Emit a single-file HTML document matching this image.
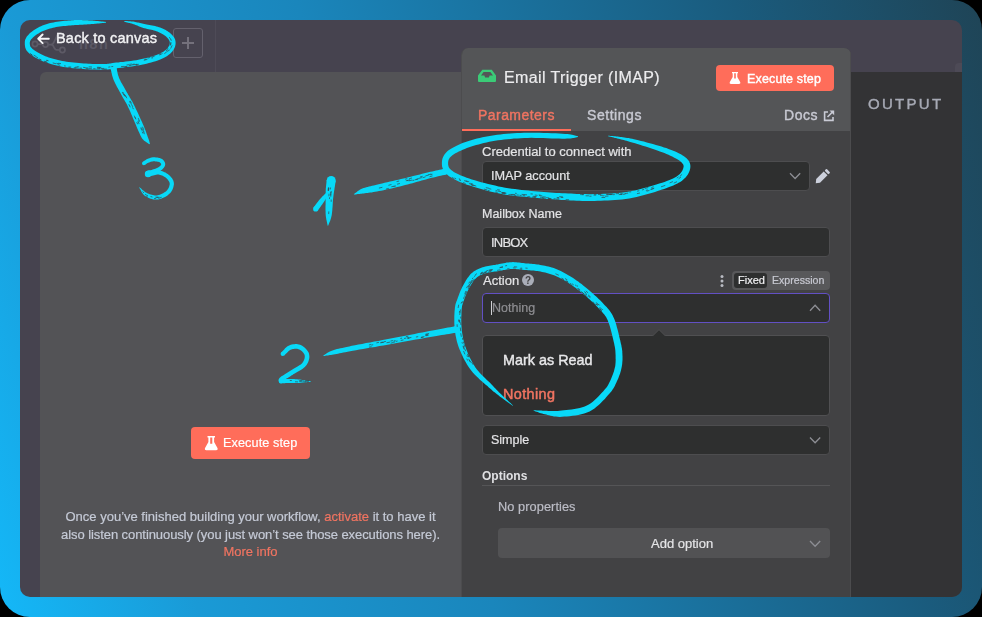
<!DOCTYPE html>
<html><head><meta charset="utf-8">
<style>
*{margin:0;padding:0;box-sizing:border-box}
html,body{width:982px;height:617px;overflow:hidden;background:#000}
body{position:relative;font-family:"Liberation Sans",sans-serif}
.a{position:absolute}
.t{position:absolute;white-space:nowrap;will-change:transform;-webkit-text-stroke:.2px currentColor}
.m{-webkit-text-stroke:.4px currentColor}
#frame{left:0;top:0;width:982px;height:617px;border-radius:30px;background:linear-gradient(72deg,#14b8f8 0%,#1a9ad6 17%,#1a86bc 42%,#1a5b7d 79%,#1f4456 100%)}
#inner{left:20px;top:20px;width:942px;height:577px;border-radius:10px;background:#46434f;overflow:hidden}
.box{position:absolute;background:#2e2f2f;border:1px solid #4d4d4f;border-radius:4px}
.lbl{color:#e4e4e6}
</style></head><body>
<div id="frame" class="a"></div>
<div id="inner" class="a">
  <!-- top bar -->
  <div class="a" style="left:195px;top:0;width:1px;height:52px;background:#4e4b57"></div>
  <div class="a" style="left:153px;top:8px;width:30px;height:30px;border:1px solid #64616d;border-radius:3px"></div>
  <div class="a" style="left:161.9px;top:21.9px;width:12px;height:2.2px;background:#74717c"></div>
  <div class="a" style="left:166.9px;top:17.2px;width:2.2px;height:11.7px;background:#74717c"></div>
  <!-- input panel -->
  <div class="a" style="left:20px;top:52px;width:430px;height:540px;background:#535356;border-radius:6px 0 0 0"></div>
  <div class="a" style="left:935px;top:43px;width:7px;height:9px;background:#4d4a56;border-radius:4px 0 0 0"></div>
  <!-- output panel -->
  <div class="a" style="left:831px;top:52px;width:120px;height:540px;background:#333335"></div>
</div>

<!-- n8n logo (faded) -->
<svg class="a" style="left:0;top:0" width="120" height="70" viewBox="0 0 120 70">
  <g fill="none" stroke="#5d5a66" stroke-width="1.7">
    <circle cx="35" cy="44" r="2.6"/><circle cx="45.5" cy="44.5" r="2.6"/><circle cx="62.4" cy="50" r="2.6"/><circle cx="59" cy="37.5" r="2.6"/>
    <path d="M37.6,44.2 H42.9 M48.1,44.6 H51 Q53,44.6 54,42 L55.5,39 Q56,37.8 56.4,37.6 M51,44.6 Q53,44.6 54,47.5 L55.5,49.5 Q56.5,50 59.8,50"/>
  </g>
  <text x="79" y="49.2" font-family="Liberation Sans" font-weight="bold" font-size="14.5" fill="#5b5865" letter-spacing="1.5">n8n</text>
</svg>

<!-- node panel -->
<div class="a" style="left:461px;top:48px;width:390px;height:549px;background:#424244;border-radius:7px 7px 0 0;overflow:hidden;border-left:1px solid #4c4c4e">
  <div class="a" style="left:0;top:0;width:390px;height:83px;background:#545557"></div>
  <div class="a" style="left:0;top:81px;width:109px;height:2px;background:#ff6d5a"></div>
  <div class="a" style="left:388px;top:0;width:1px;height:549px;background:#4c4c4e"></div>
</div>

<!-- texts -->
<svg class="a" style="left:0;top:0" width="60" height="60" viewBox="0 0 60 60"><path d="M48.8,38.8 H38.2 M42.6,34.5 L38.2,38.8 L42.6,43.1" fill="none" stroke="#f4f4f6" stroke-width="1.9" stroke-linecap="round" stroke-linejoin="round"/></svg>
<div class="t m" style="left:56.4px;top:30.5px;font-size:14.5px;line-height:14.5px;letter-spacing:.2px;color:#f2f2f4">Back to canvas</div>



<div class="t" style="left:503.9px;top:69.5px;font-size:16px;line-height:16px;letter-spacing:.38px;color:#ececee">Email Trigger (IMAP)</div>
<div class="a" style="left:716px;top:65px;width:118px;height:26px;background:#ff6d5a;border-radius:4px"></div>
<svg class="a" style="left:716px;top:65px" width="30" height="26" viewBox="716 65 30 26"><path fill="#fff" fill-rule="evenodd" d="M732,72 H738 V73.3 H737.3 V77 L740.3,82.2 Q740.8,84 739,84 H731 Q729.2,84 729.7,82.2 L732.7,77 V73.3 H732 Z M734.2,73.3 H735.8 V78.6 H734.2 Z"/></svg>
<div class="t m" style="left:746.5px;top:72.8px;font-size:12.5px;line-height:12.5px;letter-spacing:.15px;color:#fff">Execute step</div>

<div class="t m" style="left:478.1px;top:107.8px;font-size:14px;line-height:14px;letter-spacing:.45px;color:#f07461">Parameters</div>
<div class="t m" style="left:586.9px;top:107.8px;font-size:14px;line-height:14px;letter-spacing:.55px;color:#c8c9d2">Settings</div>
<div class="t m" style="left:784.1px;top:107.8px;font-size:14px;line-height:14px;letter-spacing:.55px;color:#c8c9d2">Docs</div>
<div class="t m" style="left:867.8px;top:95.6px;font-size:15px;line-height:15px;letter-spacing:2.3px;color:#a7aab5">OUTPUT</div>

<div class="t lbl" style="left:482.3px;top:145.1px;font-size:13px;line-height:13px">Credential to connect with</div>
<div class="box" style="left:482px;top:161px;width:328px;height:30px"></div>
<div class="t lbl" style="left:490.5px;top:170px;font-size:12.7px;line-height:12.7px">IMAP account</div>

<div class="t lbl" style="left:482.3px;top:208.3px;font-size:12.5px;line-height:12.5px">Mailbox Name</div>
<div class="box" style="left:482px;top:227px;width:348px;height:30px"></div>
<div class="t lbl" style="left:490.5px;top:235.7px;font-size:13px;line-height:13px;letter-spacing:-.8px">INBOX</div>

<div class="t lbl" style="left:482.7px;top:273.8px;font-size:13px;line-height:13px">Action</div>
<div class="a" style="left:732px;top:271px;width:98px;height:19px;background:#58585a;border-radius:4px"></div>
<div class="a" style="left:734px;top:273px;width:33px;height:15px;background:#2e2f2f;border-radius:3px"></div>
<div class="t" style="left:737.5px;top:274.8px;font-size:11px;line-height:11px;color:#f0f0f2">Fixed</div>
<div class="t" style="left:771.7px;top:275.1px;font-size:10.6px;line-height:10.6px;color:#c8c9d2">Expression</div>
<div class="box" style="left:482px;top:293px;width:348px;height:30px;border-color:#6250c4"></div>
<div class="a" style="left:491px;top:301px;width:1px;height:14px;background:#d0d0d4"></div>
<div class="t" style="left:492.4px;top:302.4px;font-size:12.5px;line-height:12.5px;color:#8e8e92">Nothing</div>

<div class="box" style="left:482px;top:335px;width:348px;height:81px;background:#2d2e2e;border-color:#505052"></div>
<svg class="a" style="left:650px;top:328px" width="18" height="9" viewBox="0 0 18 9"><path d="M2.5,8 L9,1.6 L15.5,8" fill="#2d2e2e" stroke="#505052" stroke-width="1"/><rect x="2" y="8" width="14" height="1" fill="#2d2e2e"/></svg>
<div class="t m" style="left:503.4px;top:352.7px;font-size:14.4px;line-height:14.4px;color:#e8e8ea">Mark as Read</div>
<div class="t" style="left:503.4px;top:387px;font-size:14.4px;line-height:14.4px;letter-spacing:.4px;-webkit-text-stroke:.5px #f07461;color:#f07461">Nothing</div>

<div class="box" style="left:482px;top:425px;width:348px;height:30px"></div>
<div class="t lbl" style="left:490.8px;top:434.3px;font-size:12.5px;line-height:12.5px">Simple</div>

<div class="t lbl" style="left:482.3px;top:469.8px;font-size:12px;line-height:12px;font-weight:bold;-webkit-text-stroke:0;color:#e0e0e3">Options</div>
<div class="a" style="left:482px;top:485px;width:348px;height:1px;background:#555557"></div>
<div class="t" style="left:497.5px;top:501px;letter-spacing:.08px;font-size:12.75px;line-height:12.75px;color:#bcbdc6">No properties</div>
<div class="a" style="left:498px;top:528px;width:332px;height:30px;background:#525254;border-radius:4px"></div>
<div class="t lbl" style="left:651px;top:537px;font-size:13px;line-height:13px">Add option</div>

<div class="a" style="left:191px;top:427px;width:119px;height:32px;background:#ff6d5a;border-radius:4px"></div>
<svg class="a" style="left:191px;top:427px" width="40" height="32" viewBox="191 427 40 32"><path fill="#fff" fill-rule="evenodd" d="M207.5,436 H215 V437.6 H214.1 V442 L217.6,448.2 Q218.2,450.2 216.2,450.2 H206.3 Q204.3,450.2 204.9,448.2 L208.4,442 V437.6 H207.5 Z M210.2,437.6 H212.3 V443.8 H210.2 Z"/></svg>
<div class="t" style="left:222.5px;top:436.9px;font-size:12.7px;line-height:12.7px;letter-spacing:.08px;color:#fff">Execute step</div>

<div class="t" style="left:40px;width:421px;text-align:center;top:508.3px;font-size:13px;line-height:17.7px;color:#c5cad6;white-space:normal">Once you’ve finished building your workflow, <span style="color:#f07461">activate</span> it to have it<br><span style="letter-spacing:-.07px">also listen continuously (you just won’t see those executions here).</span><br><span style="color:#f07461">More info</span></div>

<svg class="a" style="left:0;top:0" width="982" height="617" viewBox="0 0 982 617">
  <!-- inbox -->
  <path fill="#3bcb77" fill-rule="evenodd" d="M478,75.5 L482.3,69.8 H491.8 L496,75.5 V81 Q496,82.1 495,82.1 H479 Q478,82.1 478,81 Z M481,75.5 L483.6,72 H490.4 L493,75.5 H489.6 L488.9,77.6 H485.1 L484.4,75.5 Z"/>
  <!-- docs external icon -->
  <path fill="none" stroke="#c9cbd5" stroke-width="1.6" d="M828,112 H824.6 V120.4 H833 V117"/>
  <path fill="none" stroke="#c9cbd5" stroke-width="1.6" d="M827.5,117 L833.2,111.3"/>
  <path fill="#c9cbd5" d="M829.5,110.6 H834.2 V115.3 Z"/>
  <!-- pencil -->
  <g fill="#ccd0dc" transform="translate(823,176) rotate(-45)">
    <path d="M-10.2,0 L-6.9,-2.7 H3.7 V2.7 H-6.9 Z"/><rect x="4.9" y="-2.7" width="2.7" height="5.4" rx=".9"/>
  </g>
  <!-- chevrons -->
  <g fill="none" stroke="#8d8e94" stroke-width="1.3">
    <path d="M790,173.2 L795.1,178.5 L800.2,173.2"/>
    <path d="M810,437.5 L815.1,442.8 L820.2,437.5"/>
    <path d="M810,541 L815.1,546.2 L820.2,541"/>
    <path d="M810,310.8 L815.1,305.3 L820.2,310.8"/>
  </g>
  <!-- help -->
  <circle cx="528" cy="280" r="6" fill="#a9adb8"/>
  <text x="528" y="284" text-anchor="middle" font-family="Liberation Sans" font-weight="bold" font-size="10" fill="#424244">?</text>
  <!-- 3 dots -->
  <g fill="#b8bac2"><circle cx="722" cy="276.4" r="1.5"/><circle cx="722" cy="280.9" r="1.5"/><circle cx="722" cy="285.4" r="1.5"/></g>
</svg>
<svg class="a" style="left:0;top:0" width="982" height="617" viewBox="0 0 982 617"><g fill="#08d9f8"><path d="M106.0,21.9 L105.0,21.8 L104.0,21.7 L103.1,21.6 L102.1,21.5 L101.1,21.4 L100.1,21.3 L99.1,21.2 L98.1,21.1 L97.1,21.0 L96.0,20.9 L94.9,20.8 L93.7,20.7 L92.5,20.6 L91.3,20.6 L90.1,20.5 L88.9,20.4 L87.6,20.3 L86.4,20.3 L85.2,20.2 L84.0,20.2 L82.8,20.2 L81.7,20.1 L80.6,20.1 L79.5,20.1 L78.3,20.1 L77.2,20.1 L75.9,20.1 L74.6,20.1 L73.3,20.2 L71.8,20.3 L70.2,20.4 L68.5,20.5 L66.7,20.7 L64.8,20.8 L62.9,21.0 L60.9,21.2 L59.0,21.4 L57.1,21.7 L55.2,22.0 L53.5,22.4 L51.8,22.7 L50.1,23.1 L48.5,23.6 L47.0,24.0 L45.4,24.5 L43.9,25.1 L42.4,25.6 L41.0,26.2 L39.6,26.8 L38.3,27.5 L37.0,28.2 L35.7,28.9 L34.5,29.7 L33.3,30.6 L32.1,31.4 L31.1,32.3 L30.0,33.1 L29.1,34.0 L28.3,34.9 L27.5,35.7 L26.8,36.6 L26.3,37.5 L25.8,38.4 L25.4,39.3 L25.1,40.1 L24.9,41.0 L24.8,41.9 L24.8,42.8 L24.8,43.6 L24.8,44.4 L24.9,45.2 L25.0,46.0 L25.1,46.8 L25.3,47.7 L25.6,48.6 L26.0,49.5 L26.5,50.4 L27.2,51.3 L28.0,52.2 L28.9,53.1 L29.9,54.0 L31.0,54.8 L32.3,55.7 L33.6,56.6 L35.1,57.4 L36.6,58.3 L38.2,59.1 L39.8,59.9 L41.5,60.7 L43.3,61.4 L45.0,62.1 L46.8,62.7 L48.7,63.3 L50.7,63.9 L52.6,64.5 L54.7,65.0 L56.8,65.5 L58.9,66.0 L61.1,66.4 L63.3,66.9 L65.7,67.2 L68.1,67.6 L70.7,67.9 L73.3,68.2 L75.9,68.4 L78.5,68.6 L81.0,68.8 L83.4,69.0 L85.8,69.2 L87.9,69.3 L90.0,69.4 L91.9,69.5 L93.8,69.6 L95.7,69.6 L97.4,69.7 L99.1,69.7 L100.7,69.7 L102.2,69.7 L103.7,69.6 L105.1,69.6 L106.3,69.5 L107.4,69.5 L108.3,69.4 L109.1,69.3 L109.8,69.2 L110.5,69.0 L111.3,68.9 L112.3,68.8 L113.5,68.6 L114.9,68.4 L116.8,68.2 L118.9,67.9 L121.2,67.7 L123.7,67.4 L126.3,67.1 L129.0,66.8 L131.7,66.5 L134.4,66.1 L137.0,65.7 L139.4,65.2 L141.8,64.8 L144.2,64.2 L146.5,63.7 L148.9,63.1 L151.2,62.5 L153.5,61.8 L155.6,61.2 L157.7,60.5 L159.6,59.8 L161.4,59.1 L163.0,58.3 L164.5,57.6 L165.9,56.8 L167.2,56.0 L168.4,55.1 L169.4,54.3 L170.4,53.4 L171.3,52.5 L172.1,51.7 L172.8,50.8 L173.5,49.8 L174.1,48.8 L174.6,47.8 L175.0,46.7 L175.3,45.6 L175.5,44.6 L175.6,43.5 L175.6,42.4 L175.5,41.4 L175.3,40.3 L175.0,39.3 L174.5,38.2 L174.0,37.3 L173.3,36.4 L172.6,35.6 L171.9,34.8 L171.1,34.0 L170.3,33.3 L169.5,32.6 L168.6,31.9 L167.7,31.3 L166.7,30.7 L165.7,30.1 L164.6,29.6 L163.6,29.1 L162.5,28.6 L161.3,28.1 L160.1,27.6 L159.0,27.2 L157.7,26.8 L156.4,26.4 L155.1,26.1 L153.7,25.8 L152.2,25.5 L150.8,25.2 L149.4,25.0 L148.0,24.8 L146.7,24.5 L145.5,24.3 L144.3,24.1 L143.2,23.8 L142.2,23.6 L141.2,23.3 L140.2,23.1 L139.2,22.8 L138.2,22.6 L137.3,22.4 L136.3,22.2 L135.3,22.0 L134.3,21.8 L133.3,21.6 L132.3,21.5 L131.3,21.4 L130.3,21.3 L129.3,21.2 L128.3,21.2 L127.3,21.1 L126.3,21.1 L125.3,21.0 L124.4,20.9 L124.2,21.7 L125.2,21.9 L126.1,22.2 L127.1,22.4 L128.1,22.7 L129.0,22.9 L130.0,23.1 L130.9,23.4 L131.8,23.6 L132.8,23.9 L133.7,24.2 L134.6,24.5 L135.5,24.9 L136.4,25.2 L137.3,25.6 L138.2,26.0 L139.1,26.4 L140.1,26.8 L141.1,27.2 L142.1,27.6 L143.3,27.9 L144.5,28.3 L145.8,28.6 L147.2,28.9 L148.6,29.2 L150.0,29.5 L151.3,29.8 L152.7,30.1 L154.0,30.5 L155.2,30.8 L156.3,31.2 L157.3,31.6 L158.4,32.0 L159.4,32.5 L160.4,33.0 L161.4,33.4 L162.3,33.9 L163.2,34.5 L164.0,35.0 L164.7,35.5 L165.4,36.1 L166.1,36.6 L166.7,37.2 L167.3,37.8 L167.9,38.5 L168.4,39.1 L168.8,39.7 L169.1,40.2 L169.4,40.8 L169.6,41.2 L169.7,41.7 L169.8,42.2 L169.8,42.7 L169.8,43.2 L169.7,43.7 L169.6,44.3 L169.5,44.9 L169.3,45.4 L169.0,46.0 L168.6,46.6 L168.2,47.2 L167.7,47.9 L167.1,48.6 L166.4,49.3 L165.7,49.9 L164.9,50.6 L164.0,51.3 L163.0,52.0 L161.8,52.6 L160.6,53.3 L159.2,53.9 L157.6,54.6 L155.9,55.2 L153.9,55.8 L151.9,56.5 L149.7,57.1 L147.5,57.7 L145.2,58.2 L142.9,58.8 L140.6,59.3 L138.4,59.8 L136.1,60.2 L133.6,60.6 L131.0,60.9 L128.3,61.3 L125.7,61.6 L123.1,61.9 L120.6,62.1 L118.3,62.4 L116.1,62.6 L114.3,62.8 L112.7,63.0 L111.4,63.2 L110.4,63.4 L109.6,63.5 L108.9,63.7 L108.3,63.7 L107.6,63.8 L106.9,63.9 L106.0,64.0 L104.9,64.0 L103.6,64.0 L102.2,64.1 L100.7,64.1 L99.1,64.1 L97.5,64.1 L95.8,64.0 L94.0,64.0 L92.2,63.9 L90.3,63.8 L88.3,63.7 L86.1,63.6 L83.8,63.4 L81.4,63.2 L78.9,63.0 L76.4,62.8 L73.8,62.6 L71.3,62.3 L68.8,62.0 L66.5,61.7 L64.3,61.3 L62.2,60.9 L60.1,60.5 L58.0,60.1 L56.1,59.6 L54.1,59.1 L52.2,58.6 L50.4,58.0 L48.7,57.4 L47.0,56.8 L45.3,56.2 L43.8,55.5 L42.2,54.8 L40.7,54.1 L39.3,53.3 L37.9,52.6 L36.6,51.8 L35.4,51.0 L34.3,50.2 L33.3,49.5 L32.5,48.9 L31.9,48.3 L31.4,47.8 L31.0,47.3 L30.7,46.9 L30.4,46.5 L30.2,46.1 L30.1,45.6 L30.0,45.1 L29.9,44.6 L29.8,44.0 L29.8,43.4 L29.8,42.9 L29.8,42.5 L29.9,42.0 L30.0,41.6 L30.2,41.1 L30.4,40.6 L30.7,40.2 L31.0,39.6 L31.5,39.1 L32.1,38.4 L32.7,37.8 L33.5,37.0 L34.4,36.3 L35.3,35.5 L36.3,34.8 L37.4,34.1 L38.5,33.4 L39.6,32.7 L40.7,32.1 L41.9,31.5 L43.1,31.0 L44.4,30.5 L45.7,30.0 L47.1,29.5 L48.5,29.0 L50.0,28.6 L51.5,28.2 L53.0,27.8 L54.5,27.4 L56.1,27.1 L57.9,26.8 L59.7,26.6 L61.5,26.3 L63.4,26.1 L65.3,25.9 L67.2,25.8 L68.9,25.6 L70.6,25.4 L72.2,25.3 L73.6,25.2 L74.9,25.1 L76.1,25.0 L77.3,24.9 L78.4,24.9 L79.5,24.8 L80.6,24.8 L81.7,24.7 L82.9,24.7 L84.0,24.6 L85.2,24.5 L86.5,24.4 L87.7,24.3 L88.9,24.3 L90.1,24.2 L91.4,24.1 L92.6,24.0 L93.7,23.9 L94.9,23.8 L96.0,23.7 L97.1,23.6 L98.1,23.5 L99.1,23.4 L100.1,23.3 L101.1,23.2 L102.1,23.1 L103.1,23.0 L104.0,22.9 L105.0,22.8 L106.0,22.7Z"/>
<path d="M110.6,68.7 L110.8,69.7 L111.1,70.7 L111.3,71.7 L111.5,72.8 L111.8,73.8 L112.0,75.0 L112.3,76.1 L112.7,77.3 L113.1,78.6 L113.6,79.9 L114.2,81.2 L114.8,82.6 L115.5,84.0 L116.3,85.4 L117.0,86.9 L117.8,88.3 L118.6,89.7 L119.4,91.2 L120.1,92.6 L120.9,93.9 L121.6,95.3 L122.4,96.7 L123.1,97.9 L123.9,99.2 L124.6,100.5 L125.3,101.8 L126.1,103.1 L126.9,104.5 L127.6,106.0 L128.4,107.7 L129.3,109.5 L130.2,111.5 L131.1,113.7 L132.1,115.9 L133.0,118.2 L134.0,120.5 L134.9,122.7 L135.8,124.8 L136.6,126.7 L137.3,128.4 L137.9,129.8 L138.4,131.0 L138.9,132.1 L139.4,133.1 L139.8,134.1 L140.2,134.9 L140.6,135.7 L141.0,136.5 L141.4,137.2 L141.8,138.0 L142.3,138.7 L142.8,139.3 L143.3,139.8 L143.7,140.3 L144.2,140.7 L144.6,141.0 L145.0,141.3 L145.4,141.5 L145.7,141.8 L146.1,142.0 L146.4,142.3 L146.8,142.6 L147.2,142.8 L147.5,143.0 L147.9,143.3 L148.2,143.5 L148.6,143.7 L148.9,143.9 L149.2,144.1 L149.6,144.3 L150.0,144.1 L149.9,143.7 L149.8,143.3 L149.7,142.9 L149.6,142.5 L149.5,142.1 L149.4,141.7 L149.3,141.3 L149.2,140.9 L149.1,140.4 L148.9,140.0 L148.7,139.5 L148.6,139.0 L148.4,138.6 L148.2,138.2 L148.1,137.7 L147.9,137.3 L147.8,136.9 L147.6,136.4 L147.4,135.8 L147.2,135.2 L146.9,134.6 L146.7,133.9 L146.5,133.2 L146.2,132.4 L145.9,131.6 L145.5,130.6 L145.1,129.6 L144.7,128.4 L144.1,127.1 L143.5,125.6 L142.8,124.0 L142.0,122.1 L141.0,120.1 L140.1,117.9 L139.0,115.6 L138.0,113.3 L136.9,111.0 L135.9,108.9 L134.9,106.8 L134.0,104.9 L133.1,103.2 L132.3,101.6 L131.4,100.2 L130.6,98.8 L129.8,97.4 L129.1,96.1 L128.3,94.9 L127.6,93.6 L126.9,92.4 L126.1,91.1 L125.4,89.7 L124.6,88.3 L123.8,86.8 L123.0,85.4 L122.2,84.1 L121.4,82.7 L120.7,81.4 L120.1,80.1 L119.5,78.9 L119.0,77.7 L118.6,76.6 L118.2,75.6 L117.9,74.6 L117.7,73.6 L117.5,72.6 L117.3,71.6 L117.1,70.6 L116.9,69.5 L116.7,68.4 L116.4,67.3Z"/><circle cx="113.5" cy="68.0" r="3.0"/>
<path d="M144.8,164.9 L145.2,164.6 L145.6,164.4 L146.1,164.1 L146.5,163.8 L146.9,163.6 L147.2,163.3 L147.6,163.1 L148.0,162.9 L148.4,162.7 L148.8,162.5 L149.2,162.4 L149.7,162.2 L150.2,162.0 L150.7,161.8 L151.2,161.7 L151.6,161.6 L152.1,161.5 L152.6,161.4 L153.1,161.3 L153.6,161.3 L154.1,161.3 L154.8,161.3 L155.5,161.4 L156.2,161.4 L156.9,161.5 L157.6,161.7 L158.2,161.8 L158.8,161.9 L159.2,162.1 L159.6,162.3 L159.9,162.4 L160.2,162.7 L160.4,162.9 L160.7,163.2 L160.9,163.4 L161.0,163.7 L161.1,163.9 L161.2,164.1 L161.2,164.2 L161.2,164.3 L161.2,164.4 L161.1,164.6 L161.0,164.8 L160.8,165.2 L160.5,165.5 L160.2,165.9 L159.8,166.3 L159.4,166.6 L158.9,167.0 L158.4,167.3 L157.9,167.6 L157.2,168.0 L156.3,168.3 L155.4,168.7 L154.5,169.0 L153.5,169.3 L152.6,169.6 L151.7,169.9 L150.9,170.2 L150.1,170.4 L149.5,170.6 L149.0,170.8 L148.6,170.9 L148.2,170.9 L147.9,171.0 L147.6,171.0 L147.3,171.1 L147.1,171.1 L146.8,171.1 L146.5,171.1 L149.5,176.9 L149.7,176.6 L150.0,176.4 L150.1,176.2 L150.3,176.0 L150.4,175.8 L150.6,175.6 L150.8,175.3 L151.1,175.1 L151.4,174.8 L151.9,174.6 L152.4,174.3 L153.2,174.0 L154.0,173.6 L154.9,173.3 L155.9,172.9 L156.9,172.5 L157.9,172.1 L158.9,171.6 L159.8,171.2 L160.6,170.7 L161.3,170.2 L161.9,169.7 L162.5,169.2 L163.1,168.6 L163.6,168.1 L164.0,167.5 L164.4,166.8 L164.8,166.2 L165.0,165.5 L165.2,164.7 L165.2,163.9 L165.1,163.2 L164.9,162.4 L164.5,161.8 L164.2,161.2 L163.7,160.6 L163.2,160.0 L162.7,159.6 L162.1,159.1 L161.4,158.7 L160.7,158.4 L159.9,158.1 L159.1,157.9 L158.3,157.7 L157.5,157.6 L156.6,157.5 L155.8,157.4 L155.0,157.3 L154.2,157.3 L153.4,157.3 L152.7,157.3 L152.0,157.4 L151.3,157.6 L150.6,157.8 L150.0,157.9 L149.4,158.2 L148.8,158.4 L148.3,158.6 L147.8,158.8 L147.2,159.1 L146.7,159.3 L146.2,159.6 L145.7,159.9 L145.2,160.2 L144.8,160.5 L144.4,160.8 L144.0,161.1 L143.6,161.4 L143.2,161.6 L142.8,161.9Z"/><circle cx="143.8" cy="163.4" r="1.8"/><circle cx="148.0" cy="174.0" r="3.2"/>
<path d="M148.8,176.5 L149.9,176.3 L151.1,176.0 L152.2,175.7 L153.2,175.4 L154.2,175.2 L155.2,174.9 L156.2,174.7 L157.1,174.6 L157.9,174.5 L158.7,174.6 L159.5,174.7 L160.3,174.9 L161.1,175.2 L162.0,175.5 L162.7,175.8 L163.5,176.2 L164.2,176.7 L164.9,177.1 L165.6,177.6 L166.1,178.1 L166.7,178.6 L167.3,179.1 L167.8,179.7 L168.2,180.3 L168.7,180.9 L169.0,181.4 L169.3,182.0 L169.5,182.6 L169.6,183.1 L169.7,183.6 L169.7,184.2 L169.6,184.9 L169.4,185.6 L169.2,186.4 L168.9,187.2 L168.6,188.0 L168.1,188.8 L167.6,189.5 L167.1,190.2 L166.6,190.8 L165.9,191.4 L165.0,192.0 L164.1,192.6 L163.1,193.2 L162.0,193.7 L160.9,194.2 L159.8,194.7 L158.7,195.0 L157.7,195.3 L156.8,195.4 L155.9,195.5 L154.9,195.4 L153.9,195.3 L152.9,195.1 L151.8,194.8 L150.8,194.5 L149.7,194.2 L148.7,193.8 L147.8,193.4 L146.9,193.0 L146.1,192.6 L145.4,192.2 L144.7,191.7 L144.0,191.1 L143.3,190.5 L142.5,189.9 L141.8,189.2 L141.1,188.5 L140.4,187.9 L139.6,187.2 L139.2,187.6 L139.7,188.4 L140.2,189.2 L140.7,190.1 L141.1,191.0 L141.6,191.9 L142.1,192.8 L142.7,193.6 L143.4,194.5 L144.2,195.3 L145.1,196.0 L146.1,196.6 L147.1,197.2 L148.2,197.8 L149.4,198.3 L150.6,198.7 L151.9,199.1 L153.2,199.4 L154.5,199.6 L155.9,199.6 L157.2,199.6 L158.5,199.4 L159.9,199.1 L161.2,198.7 L162.6,198.1 L163.9,197.5 L165.1,196.9 L166.3,196.2 L167.5,195.4 L168.5,194.6 L169.4,193.8 L170.3,192.9 L171.1,192.0 L171.7,191.0 L172.3,189.9 L172.8,188.8 L173.2,187.7 L173.5,186.6 L173.7,185.5 L173.9,184.5 L173.9,183.4 L173.8,182.4 L173.5,181.3 L173.2,180.3 L172.7,179.4 L172.2,178.5 L171.6,177.7 L170.9,176.9 L170.3,176.2 L169.6,175.5 L168.9,174.9 L168.1,174.3 L167.3,173.7 L166.4,173.2 L165.5,172.6 L164.5,172.2 L163.5,171.7 L162.5,171.3 L161.5,171.0 L160.4,170.7 L159.3,170.4 L158.2,170.2 L157.0,170.2 L155.8,170.1 L154.7,170.2 L153.5,170.2 L152.4,170.3 L151.3,170.4 L150.2,170.4 L149.2,170.5 L148.2,170.5Z"/><circle cx="148.5" cy="173.5" r="3.0"/>
<path d="M578.0,136.3 L576.8,136.1 L575.8,135.8 L574.9,135.5 L574.0,135.3 L573.1,135.0 L572.0,134.8 L570.7,134.5 L569.2,134.3 L567.3,134.1 L565.1,133.9 L562.3,133.7 L559.1,133.5 L555.6,133.3 L551.7,133.2 L547.7,133.0 L543.6,132.9 L539.4,132.8 L535.3,132.7 L531.4,132.7 L527.6,132.7 L524.1,132.8 L520.6,132.9 L517.1,133.1 L513.7,133.3 L510.3,133.5 L506.9,133.8 L503.6,134.1 L500.4,134.4 L497.2,134.8 L494.2,135.2 L491.2,135.7 L488.2,136.2 L485.3,136.7 L482.5,137.3 L479.7,137.9 L477.0,138.6 L474.4,139.3 L471.9,140.0 L469.4,140.7 L467.1,141.5 L464.8,142.3 L462.5,143.1 L460.3,144.0 L458.2,145.0 L456.1,145.9 L454.2,146.9 L452.3,147.9 L450.6,149.0 L449.0,150.0 L447.6,151.1 L446.4,152.3 L445.3,153.5 L444.3,154.7 L443.6,156.0 L443.0,157.3 L442.5,158.6 L442.2,159.8 L442.0,161.1 L441.9,162.3 L441.9,163.4 L441.9,164.5 L442.0,165.7 L442.2,166.9 L442.6,168.1 L443.0,169.3 L443.6,170.6 L444.4,171.8 L445.3,172.9 L446.4,174.1 L447.7,175.1 L449.0,176.2 L450.5,177.1 L452.1,178.1 L453.8,179.1 L455.7,180.0 L457.7,181.0 L459.8,181.9 L462.1,182.8 L464.5,183.8 L467.0,184.7 L469.8,185.6 L472.8,186.6 L476.0,187.6 L479.4,188.6 L482.9,189.5 L486.4,190.5 L490.0,191.4 L493.6,192.2 L497.1,193.0 L500.6,193.7 L503.9,194.4 L507.3,194.9 L510.7,195.4 L514.1,195.8 L517.5,196.2 L520.9,196.5 L524.2,196.8 L527.5,197.1 L530.8,197.4 L534.0,197.7 L537.2,198.0 L540.3,198.3 L543.5,198.6 L546.6,198.9 L549.6,199.1 L552.7,199.3 L555.8,199.6 L558.8,199.7 L561.8,199.9 L564.8,200.1 L567.8,200.3 L570.7,200.4 L573.6,200.6 L576.5,200.7 L579.4,200.8 L582.3,200.9 L585.2,200.9 L588.2,201.0 L591.3,201.0 L594.5,200.9 L597.7,200.8 L601.0,200.7 L604.4,200.6 L607.9,200.5 L611.4,200.3 L615.0,200.1 L618.6,199.8 L622.1,199.5 L625.7,199.0 L629.3,198.5 L632.9,197.8 L636.6,197.0 L640.3,196.1 L644.1,195.1 L647.8,194.0 L651.5,193.0 L655.0,191.9 L658.3,190.8 L661.3,189.8 L664.1,188.9 L666.7,188.0 L669.1,187.1 L671.3,186.3 L673.3,185.4 L675.2,184.6 L677.0,183.7 L678.6,182.8 L680.2,181.9 L681.7,180.9 L683.1,179.8 L684.4,178.6 L685.6,177.4 L686.7,176.1 L687.7,174.7 L688.5,173.3 L689.1,171.9 L689.7,170.5 L690.1,169.1 L690.3,167.7 L690.4,166.3 L690.3,164.9 L690.0,163.6 L689.5,162.3 L688.9,161.1 L688.1,160.0 L687.2,159.0 L686.3,158.0 L685.2,157.2 L684.0,156.3 L682.7,155.4 L681.3,154.6 L679.8,153.7 L678.2,152.9 L676.4,152.1 L674.6,151.3 L672.6,150.5 L670.6,149.7 L668.5,148.9 L666.3,148.1 L664.0,147.4 L661.5,146.5 L658.8,145.7 L655.9,144.9 L652.9,144.0 L649.8,143.2 L646.8,142.4 L643.9,141.6 L641.0,140.9 L638.4,140.2 L636.1,139.7 L634.0,139.2 L632.1,138.8 L630.3,138.4 L628.7,138.1 L627.1,137.9 L625.7,137.7 L624.3,137.5 L622.9,137.3 L621.6,137.1 L620.2,136.9 L618.9,136.7 L617.5,136.6 L616.3,136.4 L615.1,136.3 L613.9,136.2 L612.8,136.1 L611.6,136.0 L610.5,135.9 L609.3,135.8 L608.1,135.7 L608.1,136.3 L609.2,136.6 L610.3,136.8 L611.5,137.1 L612.6,137.3 L613.7,137.6 L614.8,137.9 L616.0,138.1 L617.2,138.4 L618.5,138.7 L619.8,139.1 L621.1,139.4 L622.5,139.8 L623.8,140.1 L625.1,140.5 L626.5,140.8 L628.0,141.2 L629.5,141.7 L631.2,142.2 L633.1,142.7 L635.1,143.3 L637.4,144.0 L639.9,144.8 L642.7,145.7 L645.6,146.6 L648.6,147.5 L651.5,148.5 L654.5,149.5 L657.3,150.4 L659.9,151.4 L662.2,152.2 L664.4,153.1 L666.5,154.0 L668.5,154.8 L670.4,155.7 L672.2,156.5 L673.9,157.4 L675.4,158.2 L676.9,159.0 L678.1,159.8 L679.3,160.6 L680.3,161.3 L681.1,162.1 L681.9,162.7 L682.4,163.4 L682.9,164.0 L683.2,164.5 L683.4,164.9 L683.5,165.4 L683.6,165.8 L683.6,166.3 L683.6,166.9 L683.4,167.6 L683.2,168.4 L682.9,169.3 L682.5,170.3 L682.0,171.2 L681.4,172.1 L680.7,173.1 L679.9,173.9 L678.9,174.8 L677.9,175.6 L676.7,176.4 L675.4,177.2 L674.0,178.0 L672.5,178.7 L670.7,179.5 L668.9,180.3 L666.8,181.1 L664.5,181.9 L662.1,182.7 L659.3,183.6 L656.3,184.6 L653.0,185.6 L649.6,186.6 L646.0,187.6 L642.4,188.6 L638.7,189.5 L635.1,190.4 L631.5,191.1 L628.1,191.7 L624.8,192.3 L621.4,192.7 L617.9,193.0 L614.5,193.3 L611.0,193.5 L607.6,193.7 L604.2,193.8 L600.8,193.9 L597.5,194.0 L594.3,194.1 L591.2,194.2 L588.2,194.2 L585.3,194.1 L582.4,194.1 L579.6,194.0 L576.8,193.9 L573.9,193.7 L571.1,193.6 L568.1,193.4 L565.2,193.3 L562.2,193.2 L559.2,193.0 L556.2,192.9 L553.1,192.7 L550.1,192.5 L547.1,192.3 L544.0,192.1 L540.9,191.8 L537.8,191.6 L534.6,191.3 L531.4,190.9 L528.1,190.6 L524.9,190.3 L521.6,189.9 L518.3,189.6 L515.0,189.1 L511.7,188.7 L508.4,188.2 L505.1,187.7 L501.8,187.1 L498.5,186.4 L495.1,185.6 L491.6,184.8 L488.1,184.0 L484.6,183.1 L481.2,182.2 L477.9,181.2 L474.8,180.3 L471.8,179.4 L469.2,178.5 L466.7,177.7 L464.4,176.8 L462.3,176.0 L460.3,175.2 L458.4,174.3 L456.8,173.5 L455.2,172.7 L453.8,171.9 L452.6,171.1 L451.5,170.3 L450.6,169.5 L450.0,168.8 L449.4,168.2 L449.0,167.5 L448.7,166.9 L448.5,166.2 L448.3,165.6 L448.2,164.9 L448.1,164.2 L448.1,163.4 L448.1,162.6 L448.2,161.8 L448.3,161.1 L448.5,160.3 L448.7,159.6 L449.1,158.9 L449.5,158.1 L450.0,157.4 L450.7,156.7 L451.6,155.9 L452.7,155.1 L453.9,154.2 L455.4,153.3 L457.1,152.4 L458.8,151.5 L460.7,150.7 L462.7,149.8 L464.8,148.9 L466.9,148.1 L469.1,147.3 L471.3,146.6 L473.7,145.8 L476.1,145.1 L478.6,144.4 L481.1,143.7 L483.8,143.0 L486.5,142.4 L489.3,141.8 L492.1,141.3 L495.0,140.8 L498.0,140.3 L501.1,139.9 L504.2,139.5 L507.4,139.2 L510.7,138.9 L514.0,138.6 L517.4,138.4 L520.8,138.2 L524.3,138.0 L527.8,137.9 L531.4,137.8 L535.2,137.9 L539.3,137.9 L543.4,138.1 L547.5,138.2 L551.5,138.4 L555.4,138.5 L558.9,138.6 L562.1,138.7 L564.9,138.7 L567.2,138.6 L569.1,138.5 L570.6,138.4 L571.9,138.2 L573.0,138.0 L573.9,137.9 L574.8,137.7 L575.8,137.5 L576.8,137.3 L578.0,137.1Z"/>
<path d="M444.8,168.6 L443.0,169.0 L441.2,169.4 L439.5,169.8 L437.7,170.2 L436.0,170.6 L434.2,171.0 L432.3,171.4 L430.4,171.8 L428.5,172.3 L426.4,172.8 L424.3,173.3 L422.2,173.8 L419.9,174.4 L417.7,175.0 L415.4,175.5 L413.1,176.1 L410.7,176.7 L408.3,177.3 L405.9,177.9 L403.5,178.5 L401.0,179.1 L398.3,179.7 L395.6,180.3 L392.8,181.0 L390.0,181.6 L387.3,182.2 L384.6,182.8 L382.1,183.4 L379.7,184.0 L377.6,184.5 L375.6,185.0 L373.8,185.4 L372.1,185.8 L370.5,186.2 L369.0,186.5 L367.6,186.9 L366.2,187.3 L364.9,187.7 L363.6,188.1 L362.3,188.6 L361.2,189.1 L360.1,189.6 L359.2,190.2 L358.3,190.8 L357.5,191.3 L356.8,191.9 L356.1,192.5 L355.3,193.1 L354.6,193.6 L353.8,194.2 L354.0,194.6 L355.0,194.5 L355.9,194.4 L356.8,194.3 L357.7,194.1 L358.6,194.0 L359.5,193.9 L360.5,193.8 L361.5,193.7 L362.5,193.6 L363.7,193.4 L364.9,193.3 L366.1,193.1 L367.4,193.0 L368.7,192.8 L370.2,192.6 L371.7,192.4 L373.4,192.1 L375.1,191.8 L377.0,191.5 L379.0,191.1 L381.2,190.7 L383.6,190.2 L386.2,189.6 L388.8,189.0 L391.6,188.4 L394.4,187.7 L397.2,187.0 L399.9,186.4 L402.6,185.7 L405.1,185.1 L407.6,184.5 L410.0,183.8 L412.4,183.2 L414.8,182.5 L417.1,181.8 L419.4,181.2 L421.6,180.6 L423.8,179.9 L425.9,179.4 L428.0,178.8 L429.9,178.3 L431.9,177.8 L433.7,177.4 L435.5,176.9 L437.3,176.5 L439.1,176.1 L440.8,175.7 L442.6,175.3 L444.4,174.9 L446.2,174.4Z"/><circle cx="445.5" cy="171.5" r="3.0"/>
<path d="M326.7,179.9 L326.6,180.9 L326.5,181.8 L326.4,182.8 L326.3,183.8 L326.2,184.8 L326.1,185.7 L326.0,186.7 L325.9,187.7 L325.8,188.6 L325.8,189.6 L325.7,190.4 L325.7,191.2 L325.7,191.9 L325.7,192.6 L325.6,193.3 L325.6,194.1 L325.6,194.9 L325.7,195.8 L325.7,196.8 L325.7,198.0 L325.6,199.4 L325.6,201.0 L325.6,202.7 L325.6,204.5 L325.5,206.3 L325.5,208.2 L325.5,210.0 L325.6,211.8 L325.6,213.4 L325.7,214.8 L325.8,216.1 L326.0,217.4 L326.2,218.5 L326.3,219.6 L326.6,220.6 L326.8,221.6 L327.0,222.6 L327.2,223.6 L327.4,224.6 L327.7,225.7 L328.1,225.7 L328.5,224.7 L328.9,223.7 L329.3,222.8 L329.7,221.8 L330.1,220.9 L330.4,219.9 L330.8,218.8 L331.1,217.7 L331.4,216.5 L331.7,215.2 L331.9,213.7 L332.1,212.0 L332.3,210.3 L332.4,208.4 L332.6,206.6 L332.7,204.7 L332.8,202.9 L332.9,201.3 L333.0,199.7 L333.1,198.4 L333.3,197.2 L333.4,196.2 L333.5,195.4 L333.6,194.6 L333.7,193.9 L333.8,193.3 L333.9,192.6 L334.0,192.0 L334.1,191.2 L334.2,190.4 L334.4,189.6 L334.5,188.7 L334.6,187.8 L334.8,186.9 L334.9,185.9 L335.1,184.9 L335.2,184.0 L335.4,183.0 L335.5,182.0 L335.7,181.1Z"/><circle cx="331.2" cy="180.5" r="4.5"/>
<path d="M327.0,192.0 L326.3,192.7 L325.6,193.4 L324.9,194.1 L324.2,194.8 L323.5,195.4 L322.8,196.1 L322.1,196.8 L321.5,197.5 L320.8,198.3 L320.1,199.0 L319.4,199.8 L318.8,200.6 L318.1,201.4 L317.5,202.3 L316.8,203.1 L316.2,204.0 L315.5,204.8 L314.9,205.7 L314.3,206.5 L313.6,207.3 L317.8,210.5 L318.4,209.6 L319.0,208.7 L319.7,207.9 L320.3,207.0 L320.9,206.2 L321.5,205.3 L322.2,204.5 L322.8,203.6 L323.3,202.8 L323.9,202.0 L324.5,201.1 L325.0,200.3 L325.5,199.4 L326.0,198.6 L326.5,197.8 L327.0,196.9 L327.5,196.1 L328.0,195.3 L328.5,194.4 L329.0,193.6Z"/><circle cx="328.0" cy="192.8" r="1.2"/><circle cx="315.7" cy="208.9" r="2.6"/>
<path d="M513.0,405.4 L511.7,404.3 L510.5,403.1 L509.2,401.9 L508.0,400.8 L506.7,399.6 L505.5,398.5 L504.2,397.3 L503.1,396.2 L501.9,395.1 L500.8,394.1 L499.8,393.1 L498.9,392.2 L498.1,391.3 L497.3,390.5 L496.5,389.7 L495.7,388.8 L494.8,387.9 L493.9,386.9 L492.8,385.8 L491.6,384.6 L490.2,383.1 L488.6,381.6 L486.9,380.0 L485.2,378.3 L483.4,376.5 L481.6,374.8 L479.9,372.9 L478.2,371.1 L476.7,369.3 L475.4,367.5 L474.2,365.6 L473.0,363.6 L471.9,361.6 L470.8,359.6 L469.8,357.5 L468.8,355.4 L467.9,353.4 L467.1,351.3 L466.3,349.3 L465.6,347.3 L465.0,345.4 L464.4,343.5 L463.9,341.6 L463.4,339.8 L463.0,337.9 L462.7,336.1 L462.4,334.2 L462.1,332.4 L461.8,330.5 L461.6,328.6 L461.5,326.7 L461.3,324.8 L461.3,322.8 L461.2,320.7 L461.2,318.7 L461.3,316.7 L461.4,314.8 L461.4,313.0 L461.5,311.3 L461.6,309.8 L461.7,308.5 L461.9,307.5 L462.0,306.6 L462.1,305.8 L462.3,305.2 L462.5,304.5 L462.7,303.7 L463.0,302.9 L463.3,302.0 L463.7,300.9 L464.1,299.7 L464.5,298.5 L465.0,297.3 L465.5,296.0 L466.0,294.7 L466.6,293.4 L467.1,292.2 L467.7,290.9 L468.3,289.7 L468.9,288.6 L469.5,287.4 L470.2,286.2 L470.9,285.1 L471.5,283.9 L472.2,282.9 L472.9,281.8 L473.6,280.8 L474.3,279.9 L475.1,279.1 L475.8,278.4 L476.5,277.7 L477.3,277.1 L478.1,276.6 L478.9,276.1 L479.7,275.6 L480.6,275.1 L481.6,274.7 L482.5,274.3 L483.6,273.9 L484.6,273.5 L485.7,273.2 L486.8,272.9 L488.0,272.6 L489.2,272.4 L490.5,272.2 L491.9,272.0 L493.3,271.8 L494.7,271.6 L496.1,271.4 L497.6,271.2 L499.0,270.9 L500.5,270.6 L501.9,270.4 L503.4,270.1 L504.9,269.9 L506.3,269.6 L507.7,269.4 L509.1,269.3 L510.4,269.1 L511.7,269.0 L513.0,269.0 L514.3,269.0 L515.7,269.1 L517.0,269.2 L518.3,269.3 L519.7,269.4 L521.1,269.6 L522.5,269.7 L524.0,269.9 L525.4,270.0 L526.8,270.1 L528.2,270.2 L529.6,270.3 L530.9,270.4 L532.2,270.5 L533.6,270.6 L534.9,270.7 L536.2,270.9 L537.6,271.1 L539.0,271.3 L540.5,271.6 L542.1,271.9 L543.6,272.3 L545.2,272.6 L546.8,273.0 L548.4,273.4 L550.0,273.9 L551.6,274.4 L553.2,274.9 L554.7,275.5 L556.3,276.2 L557.9,277.0 L559.6,277.8 L561.2,278.7 L562.9,279.6 L564.6,280.6 L566.3,281.6 L567.9,282.6 L569.6,283.7 L571.2,284.7 L572.7,285.8 L574.3,287.0 L575.9,288.1 L577.5,289.4 L579.1,290.6 L580.6,291.8 L582.2,293.1 L583.7,294.4 L585.1,295.6 L586.6,296.8 L587.9,298.0 L589.2,299.1 L590.5,300.3 L591.8,301.4 L593.0,302.5 L594.1,303.6 L595.3,304.8 L596.4,305.9 L597.5,307.0 L598.6,308.2 L599.7,309.4 L600.7,310.6 L601.8,311.6 L602.7,312.7 L603.6,313.7 L604.5,314.7 L605.3,315.9 L606.1,317.1 L606.8,318.5 L607.6,320.0 L608.3,321.9 L609.1,324.1 L609.9,326.5 L610.6,329.1 L611.3,331.7 L612.0,334.4 L612.6,337.0 L613.2,339.5 L613.7,341.8 L614.2,343.7 L614.5,345.4 L614.8,346.8 L615.0,348.1 L615.2,349.2 L615.3,350.2 L615.4,351.1 L615.4,352.0 L615.5,352.9 L615.5,354.0 L615.6,355.1 L615.6,356.3 L615.6,357.5 L615.6,358.6 L615.7,359.8 L615.6,361.0 L615.6,362.1 L615.5,363.2 L615.4,364.4 L615.3,365.5 L615.1,366.7 L614.8,367.8 L614.5,369.0 L614.2,370.2 L613.9,371.4 L613.5,372.6 L613.0,373.9 L612.6,375.1 L612.1,376.3 L611.6,377.5 L611.1,378.7 L610.6,379.9 L610.1,381.0 L609.6,382.1 L609.1,383.1 L608.6,384.1 L608.1,385.1 L607.5,386.1 L606.7,387.2 L605.8,388.3 L604.7,389.6 L603.3,391.2 L601.8,392.8 L600.2,394.6 L598.4,396.4 L596.6,398.2 L594.7,400.0 L592.8,401.7 L590.8,403.2 L588.8,404.5 L586.8,405.6 L584.7,406.5 L582.3,407.3 L579.8,408.0 L577.1,408.5 L574.4,409.0 L571.6,409.4 L568.9,409.8 L566.3,410.1 L563.8,410.3 L561.6,410.6 L559.6,410.8 L557.7,411.0 L556.0,411.0 L554.4,411.1 L552.8,411.1 L551.2,411.0 L549.7,410.9 L548.2,410.9 L546.7,410.8 L545.2,410.8 L543.9,410.7 L542.6,410.7 L541.4,410.6 L540.2,410.6 L539.1,410.5 L538.0,410.4 L536.9,410.4 L535.8,410.3 L534.7,410.2 L533.5,410.2 L533.5,410.6 L534.5,411.0 L535.6,411.4 L536.6,411.7 L537.7,412.1 L538.7,412.5 L539.8,412.9 L540.9,413.2 L542.1,413.6 L543.4,413.9 L544.8,414.2 L546.2,414.6 L547.6,414.9 L549.0,415.3 L550.6,415.7 L552.2,416.1 L553.9,416.4 L555.8,416.6 L557.7,416.8 L559.8,416.9 L562.0,416.8 L564.4,416.6 L566.9,416.4 L569.6,416.2 L572.5,415.8 L575.4,415.4 L578.3,414.9 L581.3,414.2 L584.2,413.5 L587.0,412.5 L589.6,411.4 L592.1,410.0 L594.5,408.4 L596.8,406.6 L599.0,404.7 L601.0,402.8 L602.9,400.8 L604.8,398.9 L606.4,397.0 L607.9,395.3 L609.3,393.8 L610.6,392.3 L611.7,390.9 L612.6,389.6 L613.5,388.3 L614.2,387.1 L614.8,385.9 L615.3,384.7 L615.9,383.6 L616.4,382.5 L616.9,381.3 L617.5,380.1 L618.1,378.8 L618.6,377.4 L619.1,376.1 L619.6,374.7 L620.1,373.4 L620.5,372.0 L620.9,370.7 L621.2,369.3 L621.5,367.9 L621.8,366.6 L622.0,365.2 L622.2,363.9 L622.3,362.6 L622.4,361.3 L622.5,360.0 L622.5,358.7 L622.5,357.4 L622.5,356.1 L622.4,354.9 L622.4,353.7 L622.3,352.6 L622.3,351.5 L622.2,350.5 L622.0,349.3 L621.9,348.2 L621.6,346.9 L621.4,345.5 L621.0,344.0 L620.6,342.3 L620.2,340.3 L619.6,338.0 L619.0,335.5 L618.4,332.8 L617.7,330.1 L616.9,327.3 L616.2,324.6 L615.4,322.0 L614.5,319.6 L613.6,317.4 L612.7,315.4 L611.7,313.7 L610.7,312.2 L609.7,310.7 L608.7,309.4 L607.6,308.2 L606.6,307.1 L605.5,306.0 L604.5,304.9 L603.4,303.8 L602.3,302.5 L601.1,301.3 L599.9,300.1 L598.7,298.9 L597.5,297.7 L596.2,296.5 L594.9,295.4 L593.6,294.2 L592.2,293.0 L590.8,291.8 L589.4,290.6 L587.9,289.3 L586.4,288.0 L584.8,286.7 L583.2,285.4 L581.6,284.1 L579.9,282.9 L578.2,281.6 L576.5,280.4 L574.8,279.3 L573.1,278.1 L571.4,277.0 L569.7,276.0 L567.9,274.9 L566.2,273.9 L564.4,272.9 L562.6,272.0 L560.8,271.1 L559.0,270.2 L557.3,269.5 L555.5,268.7 L553.7,268.1 L551.9,267.6 L550.1,267.0 L548.4,266.6 L546.7,266.2 L545.0,265.8 L543.4,265.5 L541.8,265.2 L540.2,264.9 L538.6,264.6 L537.1,264.4 L535.6,264.2 L534.2,264.0 L532.8,263.9 L531.4,263.8 L530.0,263.7 L528.7,263.6 L527.3,263.5 L526.0,263.4 L524.6,263.3 L523.3,263.1 L521.9,262.9 L520.5,262.7 L519.0,262.6 L517.6,262.4 L516.1,262.3 L514.6,262.2 L513.0,262.1 L511.5,262.2 L509.9,262.3 L508.3,262.4 L506.7,262.6 L505.2,262.9 L503.7,263.2 L502.1,263.5 L500.7,263.8 L499.2,264.1 L497.8,264.4 L496.4,264.6 L495.1,264.9 L493.7,265.1 L492.3,265.3 L490.9,265.5 L489.5,265.7 L488.1,265.9 L486.7,266.2 L485.3,266.5 L483.9,266.9 L482.6,267.3 L481.3,267.7 L480.1,268.2 L478.9,268.7 L477.8,269.2 L476.6,269.8 L475.5,270.4 L474.4,271.1 L473.3,271.8 L472.3,272.7 L471.2,273.6 L470.2,274.6 L469.3,275.7 L468.4,276.9 L467.5,278.0 L466.7,279.2 L465.9,280.5 L465.2,281.7 L464.5,283.0 L463.8,284.2 L463.1,285.4 L462.4,286.7 L461.8,288.1 L461.1,289.5 L460.5,290.8 L459.9,292.2 L459.4,293.6 L458.9,295.0 L458.4,296.3 L457.9,297.5 L457.5,298.7 L457.1,299.7 L456.8,300.7 L456.4,301.5 L456.1,302.4 L455.8,303.3 L455.5,304.3 L455.3,305.3 L455.1,306.5 L454.9,307.8 L454.8,309.2 L454.6,310.8 L454.5,312.6 L454.4,314.5 L454.3,316.5 L454.3,318.6 L454.3,320.8 L454.3,322.9 L454.4,325.1 L454.6,327.3 L454.8,329.4 L455.0,331.4 L455.3,333.4 L455.6,335.4 L456.0,337.3 L456.4,339.3 L456.9,341.4 L457.5,343.4 L458.1,345.4 L458.8,347.5 L459.6,349.5 L460.5,351.6 L461.4,353.7 L462.4,355.8 L463.4,358.0 L464.6,360.2 L465.8,362.3 L467.0,364.4 L468.3,366.5 L469.7,368.6 L471.2,370.5 L472.8,372.5 L474.6,374.4 L476.4,376.3 L478.3,378.1 L480.2,379.9 L482.1,381.6 L484.0,383.2 L485.7,384.7 L487.4,386.1 L488.8,387.4 L490.1,388.6 L491.3,389.6 L492.3,390.5 L493.3,391.4 L494.2,392.1 L495.2,392.8 L496.1,393.6 L497.0,394.3 L498.1,395.1 L499.2,395.9 L500.4,396.9 L501.7,397.8 L503.0,398.8 L504.4,399.8 L505.7,400.8 L507.1,401.8 L508.5,402.8 L509.9,403.8 L511.3,404.8 L512.6,405.8Z"/>
<path d="M455.4,326.3 L452.8,326.8 L450.3,327.2 L447.9,327.6 L445.5,328.1 L443.1,328.5 L440.6,328.9 L438.0,329.4 L435.3,329.9 L432.4,330.5 L429.3,331.0 L425.9,331.7 L422.3,332.4 L418.6,333.1 L414.7,333.9 L410.7,334.7 L406.7,335.5 L402.6,336.3 L398.5,337.1 L394.5,337.8 L390.6,338.6 L386.7,339.3 L382.6,340.1 L378.4,340.9 L374.2,341.6 L370.1,342.4 L366.0,343.1 L362.1,343.9 L358.4,344.6 L355.0,345.2 L351.9,345.8 L349.2,346.4 L346.6,346.9 L344.4,347.4 L342.3,347.9 L340.4,348.3 L338.6,348.7 L337.0,349.1 L335.4,349.6 L333.9,350.0 L332.5,350.5 L331.1,351.0 L329.9,351.5 L328.9,352.0 L328.0,352.5 L327.1,353.0 L326.4,353.5 L325.7,354.0 L324.9,354.6 L324.2,355.1 L323.3,355.6 L323.5,356.0 L324.5,355.9 L325.4,355.8 L326.3,355.6 L327.2,355.5 L328.0,355.4 L328.9,355.3 L329.9,355.1 L331.0,355.0 L332.2,354.8 L333.5,354.5 L335.0,354.3 L336.5,354.0 L338.0,353.7 L339.6,353.3 L341.4,353.0 L343.3,352.6 L345.3,352.2 L347.6,351.7 L350.1,351.3 L352.9,350.8 L356.0,350.2 L359.4,349.6 L363.1,349.0 L366.9,348.3 L371.0,347.6 L375.2,346.9 L379.4,346.1 L383.5,345.4 L387.6,344.7 L391.6,344.0 L395.5,343.3 L399.6,342.6 L403.6,341.8 L407.7,341.1 L411.8,340.3 L415.8,339.6 L419.7,338.9 L423.4,338.2 L427.0,337.5 L430.3,337.0 L433.5,336.4 L436.4,335.9 L439.1,335.5 L441.7,335.1 L444.2,334.7 L446.6,334.3 L449.0,333.9 L451.4,333.5 L453.9,333.1 L456.4,332.7Z"/><circle cx="455.9" cy="329.5" r="3.2"/>
<path d="M284.1,355.5 L284.9,354.8 L285.7,354.0 L286.5,353.2 L287.3,352.5 L288.0,351.8 L288.7,351.1 L289.4,350.6 L290.1,350.1 L290.7,349.7 L291.3,349.4 L292.1,349.2 L292.9,349.0 L293.7,348.9 L294.6,348.8 L295.4,348.7 L296.3,348.7 L297.1,348.8 L297.9,349.0 L298.6,349.2 L299.2,349.4 L299.9,349.7 L300.6,350.2 L301.3,350.7 L302.0,351.3 L302.6,352.0 L303.3,352.7 L303.8,353.4 L304.2,354.1 L304.5,354.8 L304.7,355.3 L304.7,355.9 L304.8,356.6 L304.7,357.4 L304.6,358.2 L304.4,359.0 L304.1,359.8 L303.7,360.7 L303.3,361.5 L302.8,362.3 L302.3,363.0 L301.6,363.7 L300.8,364.4 L299.8,365.1 L298.7,365.8 L297.5,366.6 L296.2,367.3 L294.9,368.0 L293.6,368.8 L292.4,369.5 L291.2,370.3 L290.0,371.0 L288.8,371.7 L287.6,372.5 L286.4,373.2 L285.2,374.0 L284.1,374.7 L283.0,375.4 L282.0,376.0 L281.1,376.6 L280.4,377.2 L279.7,377.8 L279.2,378.4 L278.8,379.0 L278.6,379.9 L278.5,380.7 L278.7,381.3 L278.8,381.5 L278.8,381.4 L278.8,381.1 L278.9,381.0 L282.7,382.0 L282.9,381.5 L282.9,380.8 L282.8,380.3 L282.8,380.2 L282.9,380.4 L282.9,380.8 L282.8,381.1 L282.7,381.2 L282.9,381.1 L283.2,380.8 L283.8,380.4 L284.6,379.9 L285.5,379.3 L286.5,378.6 L287.7,377.9 L288.8,377.2 L290.1,376.4 L291.3,375.6 L292.5,374.9 L293.6,374.1 L294.8,373.4 L295.9,372.7 L297.2,372.0 L298.5,371.3 L299.9,370.5 L301.2,369.7 L302.4,368.9 L303.6,368.0 L304.8,367.0 L305.7,366.0 L306.6,364.9 L307.3,363.8 L307.9,362.7 L308.4,361.5 L308.8,360.3 L309.1,359.1 L309.3,357.9 L309.4,356.7 L309.3,355.5 L309.1,354.3 L308.8,353.1 L308.3,352.0 L307.6,350.9 L306.9,349.9 L306.0,348.9 L305.1,348.0 L304.2,347.2 L303.2,346.4 L302.2,345.8 L301.2,345.2 L300.1,344.8 L298.9,344.5 L297.8,344.3 L296.6,344.1 L295.4,344.1 L294.2,344.2 L293.0,344.3 L291.9,344.5 L290.8,344.8 L289.7,345.2 L288.6,345.7 L287.5,346.3 L286.6,347.0 L285.7,347.8 L284.9,348.6 L284.2,349.4 L283.4,350.2 L282.7,351.0 L282.0,351.7 L281.3,352.3Z"/><circle cx="282.7" cy="353.9" r="2.1"/><circle cx="280.8" cy="381.5" r="2.0"/>
<path d="M281.1,383.3 L282.0,383.3 L283.0,383.2 L283.9,383.2 L284.9,383.2 L285.8,383.1 L286.8,383.1 L287.7,383.1 L288.6,383.1 L289.6,383.0 L290.5,383.0 L291.4,383.0 L292.4,383.0 L293.3,383.0 L294.2,383.0 L295.1,382.9 L296.1,382.9 L297.0,382.9 L298.0,382.9 L299.0,382.9 L300.0,382.8 L301.0,382.7 L302.0,382.6 L303.1,382.5 L304.2,382.4 L305.3,382.3 L306.4,382.2 L307.5,382.1 L308.6,382.0 L309.7,381.9 L310.8,381.7 L310.8,381.3 L309.7,381.1 L308.6,380.9 L307.5,380.7 L306.4,380.5 L305.3,380.4 L304.3,380.2 L303.2,380.0 L302.1,379.9 L301.1,379.7 L300.0,379.6 L299.0,379.5 L298.1,379.4 L297.1,379.3 L296.2,379.2 L295.2,379.2 L294.3,379.1 L293.3,379.1 L292.4,379.0 L291.5,379.0 L290.5,379.0 L289.5,379.0 L288.6,379.0 L287.6,379.0 L286.6,379.1 L285.7,379.1 L284.7,379.1 L283.8,379.2 L282.8,379.2 L281.9,379.3 L280.9,379.3Z"/><circle cx="281.0" cy="381.3" r="2.0"/>
</g><path fill="none" stroke="#35444b" stroke-opacity=".85" stroke-width=".8" stroke-linecap="round" d="M97.0,68.9L99.5,68.9M53.1,63.0L55.8,63.7M30.4,53.8L32.5,55.3M80.2,68.1L81.6,68.2M56.8,63.4L58.7,63.8M89.1,66.9L91.6,67.0M97.3,67.3L98.5,67.3M47.4,60.4L48.2,60.7M34.0,55.3L35.6,56.2M129.3,65.6L131.2,65.4M83.5,67.4L84.7,67.5M104.9,69.2L106.5,69.1M30.8,54.1L31.7,54.8M58.0,64.8L59.8,65.2M121.4,66.6L123.8,66.4M39.1,59.0L40.8,59.9M124.3,66.9L126.4,66.7M36.3,56.9L37.6,57.6M45.3,61.7L46.9,62.3M136.1,65.4L138.2,65.0M99.1,68.1L100.2,68.1M77.1,66.8L78.8,66.9M39.9,59.5L41.1,60.0M102.0,69.2L104.8,69.1M101.0,68.5L103.7,68.4M132.2,64.9L134.3,64.7M44.3,61.3L47.0,62.3M88.8,68.6L91.5,68.7M99.2,67.4L100.9,67.4M74.2,67.8L75.0,67.9M124.9,66.8L126.9,66.6M64.5,65.9L65.3,66.0M69.8,67.0L70.9,67.1M134.8,64.6L136.6,64.3M86.2,68.7L87.8,68.8M93.6,68.7L95.2,68.7M85.1,67.8L87.9,68.0M46.4,60.3L47.2,60.5M111.7,66.6L112.8,66.5M75.1,67.9L75.9,68.0M97.6,68.0L99.6,68.0M108.7,67.1L109.9,66.9M68.6,67.2L70.1,67.4M132.8,64.3L134.3,64.1M58.8,63.3L60.6,63.6M136.2,64.6L138.2,64.3M126.9,65.0L128.9,64.7M75.5,67.2L77.2,67.3M129.8,64.3L131.6,64.1M164.7,53.4L165.8,52.6M170.4,45.0L170.7,42.6M168.5,51.0L169.5,49.8M159.8,54.2L160.6,53.8M151.8,57.0L154.3,56.2M148.1,58.0L149.9,57.5M166.3,50.6L167.4,49.7M170.8,39.3L169.5,37.5M167.2,49.1L167.9,48.4M159.7,54.8L162.1,53.7M170.8,48.2L172.0,45.7M170.7,44.8L171.0,42.9M171.2,40.4L170.8,39.6M144.8,59.5L146.1,59.2M151.9,58.0L152.7,57.8M166.6,51.9L168.3,50.4M144.2,60.2L147.0,59.5M134.4,116.0L135.3,118.1M138.4,118.5L139.2,120.4M122.4,92.5L123.8,95.0M143.4,130.6L144.0,132.0M131.6,104.6L132.6,106.5M142.6,127.1L143.7,129.6M140.8,128.0L141.7,130.2M143.6,131.9L144.3,133.8M138.9,120.5L139.3,121.4M138.0,121.3L139.0,123.7M141.7,128.0L142.6,130.2M142.3,132.0L142.7,133.1M123.0,92.3L123.6,93.4M135.1,117.5L135.8,119.0M130.4,101.2L131.4,103.2M125.3,95.6L125.9,96.5M136.9,122.4L137.5,123.9M132.7,107.7L133.3,108.8M129.6,101.6L130.5,103.2M124.4,94.3L125.5,96.1M129.0,104.6L130.1,106.9M126.1,96.9L126.7,97.9M124.1,94.9L124.8,96.1M157.8,197.1L155.7,197.2M161.3,197.4L158.7,198.3M155.5,198.5L154.5,198.5M147.6,195.7L145.3,194.5M147.5,197.1L146.7,196.7M152.1,196.9L150.9,196.6M159.0,197.3L156.6,197.7M143.7,192.7L142.9,191.8M543.0,196.8L545.4,197.0M566.1,199.6L568.7,199.8M540.4,197.2L542.6,197.3M471.2,184.4L473.5,185.2M534.0,197.1L535.7,197.2M498.2,191.1L500.8,191.6M512.8,194.4L514.8,194.6M533.6,196.3L536.3,196.6M557.8,198.1L558.9,198.1M539.1,195.0L540.2,195.1M532.4,197.1L535.2,197.3M464.5,180.7L467.3,181.7M463.4,182.7L465.3,183.4M501.9,192.6L503.1,192.8M556.4,199.1L558.9,199.2M459.2,178.9L460.0,179.3M486.2,187.7L488.6,188.2M501.9,193.4L504.8,194.0M554.0,198.8L555.3,198.8M496.0,190.6L497.0,190.9M454.8,178.2L455.8,178.7M470.8,183.4L472.6,184.0M471.4,185.1L472.7,185.5M511.0,194.4L512.9,194.7M523.1,195.6L524.8,195.8M542.4,198.0L543.6,198.1M466.1,180.9L468.9,181.8M559.6,196.7L562.5,196.9M474.1,185.4L475.9,186.0M557.1,197.5L558.6,197.6M519.9,195.3L521.2,195.5M503.5,192.8L505.9,193.2M546.4,197.7L548.8,197.9M548.8,198.5L551.2,198.7M484.3,189.2L486.7,189.8M469.3,183.6L471.3,184.3M488.1,190.4L489.2,190.6M508.9,194.6L511.8,195.0M517.0,195.0L518.4,195.1M543.2,198.1L545.5,198.2M561.2,197.4L562.9,197.5M530.9,193.9L532.4,194.0M527.8,196.6L529.8,196.8M539.5,195.6L541.9,195.8M452.3,177.6L453.9,178.5M497.6,189.7L499.5,190.0M535.2,195.1L537.2,195.3M515.4,193.3L516.3,193.4M502.3,192.6L504.2,193.0M459.4,179.9L460.6,180.5M473.0,185.2L474.2,185.6M502.2,192.7L504.6,193.1M514.1,195.2L515.9,195.5M522.0,194.4L524.3,194.6M524.6,194.6L526.6,194.8M495.6,192.1L497.2,192.4M504.0,192.9L505.8,193.2M489.3,188.7L490.9,189.1M548.5,198.5L550.3,198.6M625.1,193.5L627.8,193.1M616.3,193.7L618.6,193.5M623.3,194.3L625.1,194.1M589.7,196.2L591.1,196.2M606.4,194.3L608.2,194.2M601.9,197.5L604.8,197.5M637.5,191.1L638.9,190.8M637.3,193.6L639.6,193.1M582.3,194.6L583.5,194.6M605.4,196.2L608.0,196.1M609.4,194.5L611.2,194.5M602.8,195.9L604.1,195.8M598.3,194.5L600.8,194.5M580.5,194.6L583.1,194.6M607.2,194.6L609.5,194.5M593.9,195.0L595.5,195.0M620.5,194.0L622.3,193.8M613.2,194.7L614.4,194.6M642.3,189.9L643.7,189.5M594.5,194.7L596.2,194.7M629.7,192.0L630.9,191.8M586.0,195.8L588.5,195.8M610.1,194.1L612.3,194.0M619.1,194.6L621.6,194.3M600.5,195.4L602.3,195.3M610.4,194.6L612.2,194.5M621.0,194.3L622.1,194.2M651.1,189.1L653.9,188.3M646.3,190.3L647.4,190.0M663.2,186.1L664.9,185.5M651.0,189.5L653.4,188.7M651.7,187.4L653.3,186.9M661.4,186.7L662.5,186.4M678.9,178.6L680.7,177.2M647.0,191.1L649.1,190.5M674.1,183.0L676.7,181.8M677.1,177.9L678.3,177.0M645.2,188.4L647.9,187.6M680.1,176.1L681.8,174.6M670.0,182.8L672.6,181.7M398.8,181.1L396.9,181.5M432.1,176.0L429.9,176.6M409.7,179.9L407.3,180.6M414.0,180.2L412.9,180.5M422.3,176.4L420.5,176.8M382.0,187.4L379.3,188.0M395.6,186.0L393.9,186.4M432.1,174.3L430.8,174.6M425.1,177.0L422.9,177.6M421.5,177.7L418.7,178.4M417.7,179.0L416.6,179.3M388.4,188.5L386.5,188.9M430.9,174.1L428.3,174.8M428.2,175.2L425.8,175.8M399.5,183.6L397.4,184.1M406.9,178.7L405.5,179.1M391.1,184.6L388.8,185.2M411.6,178.1L409.4,178.7M411.9,180.1L409.1,180.8M394.1,186.2L391.7,186.7M417.9,179.0L415.3,179.7M407.7,180.3L406.2,180.7M328.6,188.6L328.4,190.0M331.2,191.5L331.0,193.3M330.8,192.2L330.6,195.0M330.9,194.4L330.8,196.3M328.8,188.0L328.5,190.6M328.4,187.7L328.1,190.3M328.8,211.8L328.7,213.7M329.6,197.6L329.5,198.6M329.0,194.1L328.9,195.9M331.2,199.9L331.2,201.4M330.5,187.9L330.3,189.1M470.2,361.7L468.8,359.2M459.4,321.6L459.4,320.1M459.8,322.6L459.8,320.5M461.2,303.3L461.6,302.2M458.6,321.2L458.6,320.0M460.7,318.1L460.7,317.0M460.8,324.5L460.7,322.8M464.8,346.6L464.2,344.7M459.4,312.4L459.5,311.4M462.5,302.4L462.9,301.4M464.0,349.1L463.1,346.6M464.9,295.3L465.5,293.9M464.8,354.0L463.7,351.4M470.5,362.1L469.6,360.5M457.2,326.5L457.1,324.7M469.0,356.9L467.7,354.2M458.2,307.6L458.6,305.1M462.3,343.3L462.1,342.5M463.6,298.4L464.3,296.7M459.8,314.6L459.9,313.4M467.4,356.7L467.0,355.8M465.6,350.9L464.9,349.2M462.8,339.6L462.5,338.2M473.0,364.5L471.7,362.4M464.3,348.3L463.4,346.0M461.3,336.4L460.8,333.6M463.8,343.2L463.4,341.9M468.7,356.7L467.8,354.8M464.9,293.5L465.8,291.3M460.7,330.8L460.3,327.9M460.2,312.6L460.4,309.8M467.6,360.3L466.9,359.0M465.8,293.9L466.9,291.3M500.6,267.3L502.6,266.9M489.9,270.2L492.3,269.8M505.6,265.8L506.7,265.6M514.3,266.8L516.8,267.0M520.2,268.9L521.5,269.1M489.3,270.1L492.1,269.7M484.8,272.6L486.5,272.2M484.8,272.0L486.5,271.6M489.6,270.9L491.4,270.6M472.7,281.1L474.2,279.2M497.5,270.3L500.0,269.9M475.5,274.7L476.6,273.9M480.6,274.0L482.1,273.3M481.9,273.3L483.0,272.8M470.6,282.3L472.0,280.2M480.4,273.9L481.2,273.5M486.8,270.7L488.1,270.4M483.3,273.4L485.3,272.7M472.4,278.7L473.0,277.9M525.8,268.1L527.2,268.2M474.3,276.4L475.3,275.5M499.8,267.7L502.6,267.1M468.6,286.0L469.6,284.1M507.5,268.9L509.0,268.7M466.6,287.8L467.6,286.1M468.9,283.1L469.7,281.8M469.8,284.8L471.2,282.4M488.6,272.0L490.9,271.6M468.2,288.8L469.6,286.2M520.9,268.1L521.9,268.2M481.3,272.7L482.5,272.3M468.2,287.1L469.3,285.2M470.9,283.2L472.4,280.8M483.0,273.6L483.9,273.2M513.3,267.9L515.3,268.0M585.1,292.4L586.2,293.3M581.7,292.0L583.7,293.7M586.0,294.1L586.6,294.7M598.6,304.3L599.3,305.1M588.5,295.2L590.4,296.8M577.0,285.7L577.7,286.2M595.2,303.9L596.1,304.9M596.6,303.8L597.6,304.9M578.5,288.6L579.9,289.7M561.6,278.3L563.3,279.2M596.3,304.3L597.4,305.3M566.1,280.9L567.7,281.9M555.8,273.9L558.5,275.1M581.8,292.1L583.2,293.3M577.6,288.7L579.8,290.5M599.8,307.3L601.6,309.3M583.9,293.9L585.5,295.2M562.7,278.9L563.4,279.3M588.5,296.2L589.9,297.4M601.8,309.0L602.5,309.7M575.4,285.1L576.1,285.7M565.3,278.7L567.0,279.7M572.2,283.9L573.4,284.7M585.3,295.0L587.4,296.9M599.9,308.9L601.1,310.2M596.4,302.6L598.2,304.4M566.6,281.2L567.9,282.0M584.6,291.9L585.3,292.5M593.0,301.9L594.2,303.0M570.2,283.4L571.3,284.2M586.1,291.1L587.8,292.6M599.7,308.7L601.6,310.7M383.7,342.3L380.8,342.8M424.1,336.7L421.4,337.3M395.2,340.7L394.0,340.9M401.7,338.2L400.7,338.4M428.7,333.6L425.9,334.1M427.2,334.7L425.8,335.0M428.2,335.3L426.1,335.7M408.4,337.6L407.1,337.8M392.5,340.6L390.9,341.0M405.7,338.2L404.4,338.4M389.6,342.2L386.9,342.7M411.0,337.5L408.4,338.0M392.1,342.9L391.0,343.1M370.7,344.6L369.3,344.9M372.8,344.8L371.6,345.0M423.0,337.2L421.2,337.5M397.2,341.1L396.2,341.3M382.9,342.1L380.9,342.5M427.9,334.7L425.7,335.1M407.9,336.3L406.3,336.6M403.1,340.0L401.1,340.4M385.5,341.5L384.2,341.7M371.2,346.8L369.4,347.1M409.0,338.3L407.8,338.5M394.6,342.0L392.7,342.4M378.6,342.4L376.8,342.8M417.8,336.7L416.3,337.0M301.0,380.9L303.8,381.0M305.4,381.2L308.4,381.3M299.8,380.8L301.7,380.9M290.2,380.5L291.4,380.5M295.4,381.8L297.6,381.9M303.9,381.8L305.4,381.8M299.3,381.1L300.9,381.2M305.8,380.7L308.5,380.8"/>
</svg>
</body></html>
